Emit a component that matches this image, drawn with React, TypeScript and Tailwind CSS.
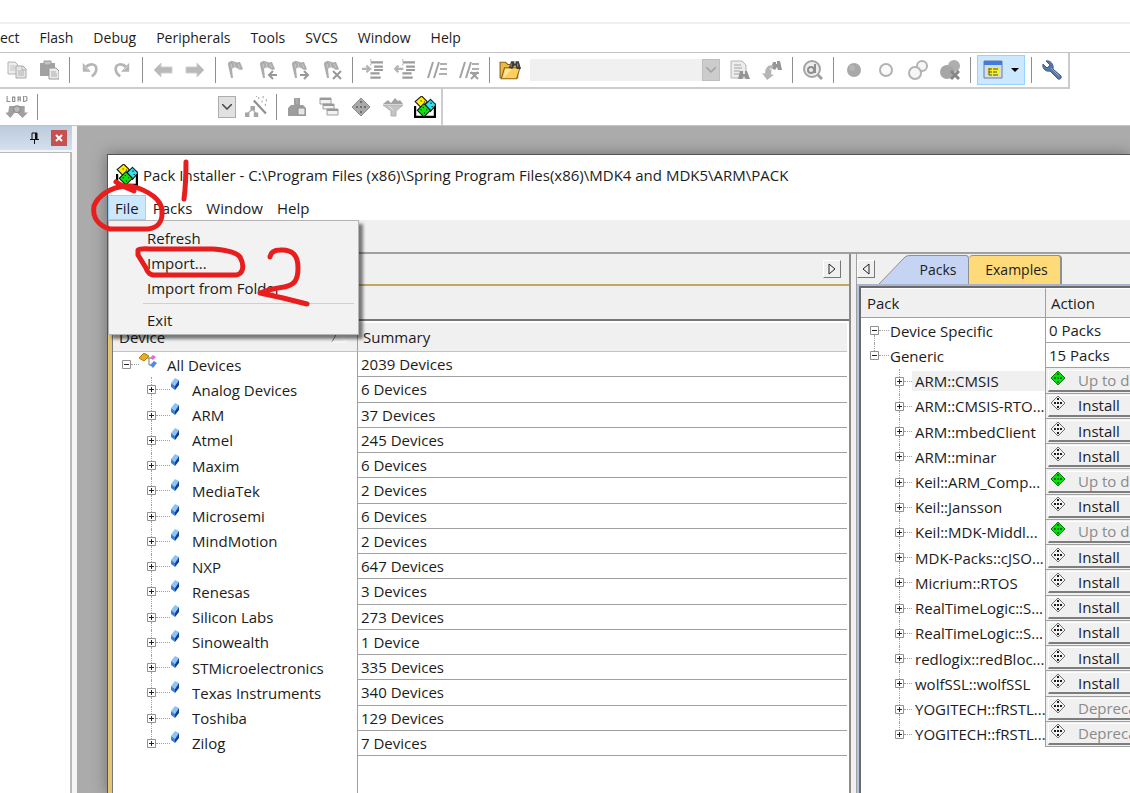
import type { ReactNode } from "react";

type RowState = "ok" | "install" | "deprecated";

const mainMenu = ["ect", "Flash", "Debug", "Peripherals", "Tools", "SVCS", "Window", "Help"];

const devices = [
  { name: "Analog Devices", summary: "6 Devices" },
  { name: "ARM", summary: "37 Devices" },
  { name: "Atmel", summary: "245 Devices" },
  { name: "Maxim", summary: "6 Devices" },
  { name: "MediaTek", summary: "2 Devices" },
  { name: "Microsemi", summary: "6 Devices" },
  { name: "MindMotion", summary: "2 Devices" },
  { name: "NXP", summary: "647 Devices" },
  { name: "Renesas", summary: "3 Devices" },
  { name: "Silicon Labs", summary: "273 Devices" },
  { name: "Sinowealth", summary: "1 Device" },
  { name: "STMicroelectronics", summary: "335 Devices" },
  { name: "Texas Instruments", summary: "340 Devices" },
  { name: "Toshiba", summary: "129 Devices" },
  { name: "Zilog", summary: "7 Devices" },
];

const packs: { name: string; state: RowState }[] = [
  { name: "ARM::CMSIS", state: "ok" },
  { name: "ARM::CMSIS-RTO...", state: "install" },
  { name: "ARM::mbedClient", state: "install" },
  { name: "ARM::minar", state: "install" },
  { name: "Keil::ARM_Comp...", state: "ok" },
  { name: "Keil::Jansson", state: "install" },
  { name: "Keil::MDK-Middl...", state: "ok" },
  { name: "MDK-Packs::cJSO...", state: "install" },
  { name: "Micrium::RTOS", state: "install" },
  { name: "RealTimeLogic::S...", state: "install" },
  { name: "RealTimeLogic::S...", state: "install" },
  { name: "redlogix::redBloc...", state: "install" },
  { name: "wolfSSL::wolfSSL", state: "install" },
  { name: "YOGITECH::fRSTL...", state: "deprecated" },
  { name: "YOGITECH::fRSTL...", state: "deprecated" },
];

const stateLabel: Record<RowState, string> = {
  ok: "Up to date",
  install: "Install",
  deprecated: "Deprecated",
};

/* ---------- icons ---------- */

function Icon({ children, size = 20 }: { children: ReactNode; size?: number }) {
  return (
    <svg width={size} height={size} viewBox="0 0 20 20" fill="none" aria-hidden="true" className="shrink-0">
      {children}
    </svg>
  );
}

const CopyIcon = () => (
  <Icon>
    <path d="M1 2h7l3 3v9H1z" fill="#ececec" stroke="#b4b4b4" />
    <path d="M3 6h5M3 8h6M3 10h5" stroke="#c4c4c4" />
    <path d="M9 6h7l3 3v9H9z" fill="#e6e6e6" stroke="#a9a9a9" />
    <path d="M15 6v4h4M11 11h6M11 13h6M11 15h6" stroke="#b4b4b4" />
  </Icon>
);

const PasteIcon = () => (
  <Icon>
    <path d="M1 3h15v13H1z" fill="#a2a2a2" />
    <path d="M5 1h7v4H5z" fill="#c4c4c4" stroke="#999" />
    <path d="M10 8h7l3 3v8H10z" fill="#ececec" stroke="#999" />
    <path d="M12 12h5M12 14h6M12 16h6" stroke="#aaa" />
  </Icon>
);

const UndoIcon = ({ flip = false }: { flip?: boolean }) => (
  <Icon size={18}>
    <g transform={flip ? "translate(20 0) scale(-1 1)" : undefined}>
      <path d="M5 7c5-5 12-4 12 2 0 4-2 6-5 8" stroke="#b5b5b5" strokeWidth="3" />
      <path d="M2 2v10h9z" fill="#b5b5b5" />
      <path d="M4 6l4 4" stroke="#dedede" />
    </g>
  </Icon>
);

const ArrowIcon = ({ flip = false }: { flip?: boolean }) => (
  <Icon>
    <path
      d="M1 10l7-7v4h11v6H8v4z"
      fill="#b9b9b9"
      stroke="#cfcfcf"
      transform={flip ? "translate(20 0) scale(-1 1)" : undefined}
    />
  </Icon>
);

const FlagIcon = ({ mark }: { mark?: "left" | "right" | "x" }) => (
  <Icon>
    <path d="M2 3c3-3 5-2 7-1 3 1 4 0 5 0l3 7c-3 2-4 0-6-1-3-1-4 0-5 1l1 9H5L2 5z" fill="#adadad" />
    <path d="M5 4l1 4M8 3l1 4M12 4l2 4" stroke="#c9c9c9" />
    {mark === "left" && <path d="M19 15h-8m4-4l-4 4 4 4" stroke="#989898" strokeWidth="2" />}
    {mark === "right" && <path d="M10 15h8m-4-4l4 4-4 4" stroke="#989898" strokeWidth="2" />}
    {mark === "x" && <path d="M11 11l8 8m0-8l-8 8" stroke="#989898" strokeWidth="2" />}
  </Icon>
);

const IndentIcon = ({ flip = false }: { flip?: boolean }) => (
  <Icon size={22}>
    <path d="M8 3h11M11 7h8M11 10h8M8 13h8M8 17h9" stroke="#9b9b9b" strokeWidth="2" />
    <path d="M8 0v20" stroke="#b8b8b8" strokeDasharray="2 2" />
    <path d={flip ? "M8 9H1m3-3L1 9l3 3" : "M0 9h7M4 6l3 3-3 3"} stroke="#b3b3b3" strokeWidth="2" />
  </Icon>
);

const CommentIcon = ({ remove = false }: { remove?: boolean }) => (
  <Icon>
    <path d="M1 18L6 2M7 18l5-16" stroke="#a3a3a3" strokeWidth="2" />
    <path d="M13 4h7M13 9h7" stroke="#b0b0b0" strokeWidth="2" />
    {remove ? (
      <path d="M12 12l7 7m0-7l-7 7M11 13h9" stroke="#a0a0a0" strokeWidth="2" />
    ) : (
      <path d="M12 14h8" stroke="#b0b0b0" strokeWidth="2" />
    )}
  </Icon>
);

const FindFolderIcon = () => (
  <Icon size={22}>
    <path d="M1 3h5l2 2h9v12H1z" fill="#e9b949" stroke="#8a6414" />
    <path d="M2 18l3-10h14l-3 10z" fill="#ffcf5a" stroke="#8a6414" />
    <path d="M4 17l2-8h6z" fill="#ffe9a8" />
    <path d="M9 8l2-6h3v2h1V2h3l2 7h-4l-1-3h-1l-2 3z" fill="#3c3c3c" />
    <path d="M11 4v3M17 4v3" stroke="#8e8e8e" />
  </Icon>
);

const FindDocIcon = () => (
  <Icon>
    <path d="M1 1h11l4 4v13H1z" fill="#ececec" stroke="#b4b4b4" />
    <path d="M4 5h7M4 8h8M4 11h6M4 14h5" stroke="#a4a4a4" />
    <path d="M8 19l2-8h3v3h2v-3h2l3 8h-4l-2-3-2 3z" fill="#949494" />
  </Icon>
);

const FindDownIcon = () => (
  <Icon>
    <path d="M9 8l2-6h3v2h1V1h3l2 9h-4l-1-3-2 3z" fill="#969696" />
    <path d="M3 9h6v5h3l-6 6-6-6h3z" fill="#b5b5b5" transform="rotate(8 6 14)" />
    <path d="M5 11c1-4 3-5 6-4" stroke="#b5b5b5" strokeWidth="3" />
  </Icon>
);

const DebugIcon = () => (
  <Icon>
    <path d="M14 14l5 5" stroke="#a0a0a0" strokeWidth="3" />
    <circle cx="9" cy="9" r="8" fill="#ededed" stroke="#a4a4a4" strokeWidth="2" />
    <circle cx="8" cy="10" r="3" stroke="#8f8f8f" strokeWidth="2" />
    <path d="M12 4v9" stroke="#8f8f8f" strokeWidth="2" />
  </Icon>
);

const DotIcon = () => (
  <Icon>
    <circle cx="10" cy="10" r="7" fill="#a8a8a8" />
    <circle cx="8" cy="8" r="3" fill="#b5b5b5" />
  </Icon>
);

const RingIcon = () => (
  <Icon>
    <circle cx="10" cy="10" r="6" fill="#fafafa" stroke="#b2b2b2" strokeWidth="2" />
  </Icon>
);

const RingsIcon = () => (
  <Icon>
    <circle cx="14" cy="6" r="5" fill="#f6f6f6" stroke="#b2b2b2" strokeWidth="2" />
    <circle cx="7" cy="13" r="6" fill="#f6f6f6" stroke="#b2b2b2" strokeWidth="2" />
  </Icon>
);

const KillDotsIcon = () => (
  <Icon>
    <circle cx="14" cy="6" r="6" fill="#aeaeae" />
    <circle cx="7" cy="12" r="7" fill="#a6a6a6" />
    <path d="M11 11l8 8m0-8l-8 8" stroke="#878787" strokeWidth="3" />
  </Icon>
);

const WindowIcon = () => (
  <Icon>
    <path d="M1 1h18v17H1z" fill="#d5ddea" stroke="#6f7d92" />
    <path d="M1 1h18v4H1z" fill="#3f7ce0" />
    <path d="M4 7h12v9H4z" fill="#f5f02a" />
    <path d="M6 8v7M6 9h3M6 12h3M6 15h3M10 9h5M10 12h4M10 15h5" stroke="#4d5530" />
  </Icon>
);

const WrenchIcon = () => (
  <Icon>
    <path
      d="M4 1l4 4-3 3-4-4c-1 5 3 8 7 7l8 8c2 1 4-1 3-3l-8-7c1-5-3-9-7-8z"
      fill="#5876a6"
      stroke="#425c88"
      strokeWidth="1"
    />
    <path d="M9 8l8 8" stroke="#91a9cc" />
  </Icon>
);

const LoadIcon = () => (
  <Icon size={22}>
    <path
      d="M1 0v5h3M6 1h2v4H6zM11 5V1h2v4M11 3h2M16 0v5h1l2-1V1l-2-1z"
      stroke="#8d8d8d"
      strokeWidth="1"
    />
    <path d="M3 9h14v6h3l-5 5-5-5h3-6-3 4l-4 5-5-5h3z" fill="#a0a0a0" />
    <circle cx="10" cy="12" r="3" fill="#bababa" stroke="#8d8d8d" />
  </Icon>
);

const WandIcon = () => (
  <Icon size={22}>
    <path d="M8 4l11 12" stroke="#8f8f8f" strokeWidth="2" />
    <path d="M12 2h1M16 1h1M15 5h1M19 4h1M18 8h1M10 0h1" stroke="#aaa" strokeWidth="2" />
    <path d="M5 9h4v4H5zM0 15h4v4H0zM8 15h4v4H8z" fill="#a5a5a5" />
    <path d="M7 12l-5 4M7 12l3 4" stroke="#a5a5a5" />
  </Icon>
);

const TargetIcon = () => (
  <Icon>
    <path d="M7 1h6v7H7zM1 11l3-3h12l3 3v8H1z" fill="#9d9d9d" />
    <path d="M11 11h7v7h-7z" fill="#e6e6e6" stroke="#8d8d8d" />
    <path d="M8 2h2v5" stroke="#b7b7b7" />
  </Icon>
);

const LayersIcon = () => (
  <Icon>
    <path d="M1 1h11v6H1zM4 7h11v5H4zM8 12h11v6H8z" fill="#f2f2f2" stroke="#a0a0a0" strokeWidth="1" />
    <path d="M1 2h11M4 8h11M8 13h11" stroke="#999" strokeWidth="2" />
  </Icon>
);

const GreyDieIcon = () => (
  <Icon>
    <path d="M10 1l9 9-9 9-9-9z" fill="#a9a9a9" stroke="#8d8d8d" />
    <path d="M9 4h2v2H9zM5 9h2v2H5zM13 9h2v2h-2zM9 14h2v2H9zM9 9h2v2H9z" fill="#6f6f6f" />
  </Icon>
);

const FunnelIcon = () => (
  <Icon>
    <path d="M0 7l5-4 3 3 4-5 3 3 2-1 3 4z" fill="#a3a3a3" />
    <path d="M0 8h20l-7 6v5H8v-5z" fill="#c4c4c4" stroke="#b0b0b0" />
    <path d="M6 9l4 4" stroke="#e6e6e6" />
  </Icon>
);

const PackIcon = ({ size = 22 }: { size?: number }) => (
  <Icon size={size}>
    <path d="M1 9v10h18V7" fill="#fff" stroke="#000" strokeWidth="2" />
    <path d="M7 0l5 5-5 6-6-6z" fill="#ffee00" stroke="#222" />
    <path d="M15 3l5 5-5 6-5-6z" fill="#2fe3f0" stroke="#222" />
    <path d="M9 7l6 6-6 6-6-6z" fill="#12df12" stroke="#111" />
    <path d="M8 10h1v1H8zM11 12h1v1h-1zM6 12h1v1H6zM9 15h1v1H9zM6 4h1v1H6zM9 5h1v1H9zM15 6h1v1h-1zM16 9h1v1h-1z" fill="#000" />
  </Icon>
);

const StateIcon = ({ on }: { on: boolean }) => (
  <svg width="16" height="16" viewBox="0 0 16 16" aria-hidden="true" className="shrink-0">
    <path d="M8 1l7 7-7 7-7-7z" fill={on ? "#00e400" : "#f2f2f2"} stroke={on ? "#0a7a0a" : "#6f6f6f"} />
    <path d="M7 3h2v2H7zM4 7h2v2H4zM10 7h2v2h-2zM7 11h2v2H7zM7 7h2v2H7z" fill={on ? "#063" : "#1c1c1c"} />
  </svg>
);

const RootIcon = () => (
  <svg width="18" height="16" viewBox="0 0 18 16" fill="none" aria-hidden="true" className="mb-2 shrink-0">
    <path d="M8 5h4M10 5v7h3" stroke="#7b7b7b" />
    <path d="M0 5l5-5 5 3-5 5z" fill="#e9ae22" stroke="#b37d10" />
    <path d="M11 5l3-3 3 2-3 3z" fill="#dc6ddb" />
    <path d="M11 12l4-4 3 2-4 5z" fill="#4f8be0" />
  </svg>
);

const ChipIcon = () => (
  <svg width="10" height="12" viewBox="0 0 10 12" aria-hidden="true" className="mb-3 shrink-0">
    <path d="M1 5l4-5 4 2-4 6z" fill="#8cc4f4" />
    <path d="M1 5l4 3v4L1 9z" fill="#3d7fd6" />
    <path d="M9 2v5l-4 5V8z" fill="#0f3f9c" />
  </svg>
);

/* ---------- small controls ---------- */

function ToolButton({ label, children }: { label: string; children: ReactNode }) {
  return (
    <button type="button" aria-label={label} title={label} className="flex h-8 w-8 shrink-0 items-center justify-center">
      {children}
    </button>
  );
}

function Separator() {
  return (
    <div className="flex w-[9px] shrink-0 justify-center">
      <div className="h-[26px] w-px bg-[#8e8e8e]" />
    </div>
  );
}

function ComboBox({ label, disabled = false }: { label: string; disabled?: boolean }) {
  return (
    <div className={`mr-1 flex h-[22px] w-[190px] shrink-0 ${disabled ? "bg-[#f0f0f0]" : "bg-white"}`}>
      <div className="relative flex-1">
        <select aria-label={label} disabled={disabled} className="h-full w-full appearance-none bg-transparent">
          <option></option>
        </select>
        <span
          className={`pointer-events-none absolute inset-y-0 right-0 flex w-[18px] items-center justify-center border ${
            disabled ? "border-[#bfbfbf] bg-[#cccccc]" : "border-[#adadad] bg-[#e1e1e1]"
          }`}
        >
          <svg width="10" height="6" viewBox="0 0 10 6" fill="none">
            <path d="M0 0l5 5 5-5" stroke={disabled ? "#a0a0a0" : "#444"} strokeWidth="1.5" />
          </svg>
        </span>
      </div>
    </div>
  );
}

function Expander({ open = false, up = false, down = false }: { open?: boolean; up?: boolean; down?: boolean }) {
  return (
    <span className="flex h-[25px] w-[9px] shrink-0 flex-col items-center">
      <span className={`w-px flex-1 border-l border-dotted ${up ? "border-[#a0a0a0]" : "border-transparent"}`} />
      <svg width="9" height="9" viewBox="0 0 9 9" fill="none">
        <path d="M.5.5h8v8h-8z" fill="#fff" stroke="#919191" />
        <path d={open ? "M2 4.5h5" : "M2 4.5h5M4.5 2v5"} stroke="#222" />
      </svg>
      <span className={`w-px flex-1 border-l border-dotted ${down ? "border-[#a0a0a0]" : "border-transparent"}`} />
    </span>
  );
}

function ScrollButton({ left = false }: { left?: boolean }) {
  return (
    <button
      type="button"
      aria-label={left ? "Previous" : "Next"}
      className="flex size-[18px] shrink-0 items-center justify-center border border-t-white border-r-[#777] border-b-[#777] border-l-white bg-[#f0f0f0]"
    >
      <svg width="8" height="12" viewBox="0 0 8 12" fill="none">
        <path d={left ? "M7 1v10L1 6z" : "M1 1v10l6-5z"} stroke="#222" />
      </svg>
    </button>
  );
}

/* ---------- IDE chrome ---------- */

function MainToolbars() {
  return (
    <header className="bg-white">
      <div className="h-[22px]" />
      <nav className="flex h-[31px] items-center gap-5 border-t-2 border-b border-t-[#f0f0f0] border-b-[#c4c4c4] text-sm font-medium text-[#1c1c1c]">
        {mainMenu.map((item) => (
          <button key={item} type="button">
            {item}
          </button>
        ))}
      </nav>

      <div className="flex h-9 w-[1070px] items-center border-r-2 border-b-2 border-[#cccccc] pl-px">
        <ToolButton label="Copy"><CopyIcon /></ToolButton>
        <ToolButton label="Paste"><PasteIcon /></ToolButton>
        <Separator />
        <ToolButton label="Undo"><UndoIcon /></ToolButton>
        <ToolButton label="Redo"><UndoIcon flip /></ToolButton>
        <Separator />
        <ToolButton label="Back"><ArrowIcon /></ToolButton>
        <ToolButton label="Forward"><ArrowIcon flip /></ToolButton>
        <Separator />
        <ToolButton label="Toggle bookmark"><FlagIcon /></ToolButton>
        <ToolButton label="Previous bookmark"><FlagIcon mark="left" /></ToolButton>
        <ToolButton label="Next bookmark"><FlagIcon mark="right" /></ToolButton>
        <ToolButton label="Clear bookmarks"><FlagIcon mark="x" /></ToolButton>
        <Separator />
        <ToolButton label="Indent"><IndentIcon /></ToolButton>
        <ToolButton label="Unindent"><IndentIcon flip /></ToolButton>
        <ToolButton label="Comment"><CommentIcon /></ToolButton>
        <ToolButton label="Uncomment"><CommentIcon remove /></ToolButton>
        <Separator />
        <ToolButton label="Find in files"><FindFolderIcon /></ToolButton>
        <div className="ml-1 flex">
          <ComboBox label="Find text" disabled />
        </div>
        <ToolButton label="Find"><FindDocIcon /></ToolButton>
        <ToolButton label="Incremental find"><FindDownIcon /></ToolButton>
        <Separator />
        <ToolButton label="Debug"><DebugIcon /></ToolButton>
        <Separator />
        <ToolButton label="Insert breakpoint"><DotIcon /></ToolButton>
        <ToolButton label="Disable breakpoint"><RingIcon /></ToolButton>
        <ToolButton label="Disable all breakpoints"><RingsIcon /></ToolButton>
        <ToolButton label="Kill all breakpoints"><KillDotsIcon /></ToolButton>
        <Separator />
        <button
          type="button"
          aria-label="Project windows"
          className="mx-[2px] flex h-[30px] w-12 shrink-0 items-center justify-center gap-2 border border-[#99d1ff] bg-[#cce8ff]"
        >
          <WindowIcon />
          <svg width="8" height="4" viewBox="0 0 8 4">
            <path d="M0 0h8L4 4z" fill="#000" />
          </svg>
        </button>
        <Separator />
        <ToolButton label="Configuration"><WrenchIcon /></ToolButton>
      </div>

      <div className="border-b border-[#c4c4c4]">
        <div className="flex h-9 w-[443px] items-center border-r-2 border-[#cccccc] pl-px">
          <ToolButton label="Load"><LoadIcon /></ToolButton>
          <Separator />
          <div className="ml-1 flex">
            <ComboBox label="Target" />
          </div>
          <ToolButton label="Options for target"><WandIcon /></ToolButton>
          <Separator />
          <ToolButton label="File extensions"><TargetIcon /></ToolButton>
          <ToolButton label="Manage project items"><LayersIcon /></ToolButton>
          <ToolButton label="Run-time environment"><GreyDieIcon /></ToolButton>
          <ToolButton label="Select software packs"><FunnelIcon /></ToolButton>
          <ToolButton label="Pack installer"><PackIcon /></ToolButton>
        </div>
      </div>
    </header>
  );
}

function SidePanel() {
  return (
    <aside className="flex w-[77px] shrink-0 flex-col bg-[#f5f5f5] pr-[5px]">
      <div className="flex h-6 shrink-0 items-center justify-end gap-3 bg-linear-to-b from-[#bccbdc] to-[#d3e0ee] pr-[5px]">
        <button type="button" aria-label="Auto hide">
          <svg width="9" height="12" viewBox="0 0 9 12" fill="none">
            <path d="M2 7V1h5v6M0 7.5h9M4.500 8v4" stroke="#111" />
            <path d="M6 1v6" stroke="#111" strokeWidth="2" />
          </svg>
        </button>
        <button type="button" aria-label="Close" className="flex size-4 items-center justify-center bg-[#c75050]">
          <svg width="8" height="8" viewBox="0 0 8 8">
            <path d="M1 1l6 6m0-6L1 7" stroke="#fff" strokeWidth="2" />
          </svg>
        </button>
      </div>
      <div className="mt-[2px] flex-1 border-t border-r-2 border-[#b9b9b9] bg-white" />
    </aside>
  );
}

/* ---------- pack installer ---------- */

function FileMenu() {
  const item = "h-[25px] pl-[38px] text-left";
  return (
    <div className="absolute top-full left-0 z-10 flex w-[251px] flex-col border border-[#b4b4b4] bg-[#f2f2f2] pt-1 pb-[2px] shadow-[4px_4px_3px_rgba(0,0,0,0.5)]">
      <button type="button" className={item}>Refresh</button>
      <button type="button" className={item}>Import...</button>
      <button type="button" className={item}>Import from Folder</button>
      <div className="my-[3px] ml-[34px] mr-1 h-px bg-[#d0d0d0]" />
      <button type="button" className={item}>Exit</button>
    </div>
  );
}

function DevicesPane() {
  return (
    <section className="flex w-[743px] shrink-0 flex-col border-r-2 border-[#8c8c8c]">
      <div className="flex h-[30px] shrink-0 items-center justify-end pr-2">
        <ScrollButton />
      </div>
      <div className="flex flex-1 flex-col border-t-2 border-l-4 border-t-[#bfa860] border-l-[#e3c675]">
        <div className="h-[33px] shrink-0 border-l border-[#777]" />
        <div className="flex-1 border-t-2 border-l border-[#777] bg-white pr-[2px]">
          <table className="h-[435px] w-full table-fixed border-separate border-spacing-0 text-left">
            <colgroup>
              <col className="w-[245px]" />
              <col />
            </colgroup>
            <thead>
              <tr className="h-[31px] bg-[#f0f0f0]">
                <th className="border-t-2 border-r border-b border-t-white border-r-[#a0a0a0] border-b-[#c4c4c4] p-0 pr-2 pl-[6px] font-normal">
                  <div className="flex items-center justify-between">
                    Device
                    <svg width="18" height="12" viewBox="0 0 18 12" fill="none">
                      <path d="M1 11L7 0" stroke="#777" />
                      <path d="M7 0l9 11H1" stroke="#fff" />
                    </svg>
                  </div>
                </th>
                <th className="border-t-2 border-b border-t-white border-b-[#c4c4c4] p-0 pl-[5px] font-normal">Summary</th>
              </tr>
            </thead>
            <tbody>
              <tr>
                <td className="border-r border-[#a0a0a0] p-0">
                  <div className="flex h-[25px] items-center pl-[9px]">
                    <Expander open />
                    <span className="w-2 border-t border-dotted border-[#a0a0a0]" />
                    <RootIcon />
                    <span className="pl-[10px]">All Devices</span>
                  </div>
                </td>
                <td className="border-b border-[#a0a0a0] p-0 pl-[3px]">2039 Devices</td>
              </tr>
              {devices.map((d, i) => (
                <tr key={d.name}>
                  <td className="border-r border-[#a0a0a0] p-0">
                    <div className="flex h-[25px] items-center pl-[34px]">
                      <Expander up down={i < devices.length - 1} />
                      <span className="w-[14px] border-t border-dotted border-[#a0a0a0]" />
                      <ChipIcon />
                      <span className="pl-3">{d.name}</span>
                    </div>
                  </td>
                  <td className="border-b border-[#a0a0a0] p-0 pl-[3px]">{d.summary}</td>
                </tr>
              ))}
            </tbody>
          </table>
          <div className="h-full w-[245px] border-r border-[#a0a0a0]" />
        </div>
      </div>
    </section>
  );
}

function PacksPane() {
  return (
    <section className="ml-[5px] flex min-w-0 flex-1 flex-col border-l border-[#a0a0a0]">
      <div className="flex h-[30px] shrink-0 items-center">
        <ScrollButton left />
        <div className="flex self-end pl-1" role="tablist">
          <button type="button" role="tab" aria-selected="true" className="relative h-[29px] w-[90px] pl-7">
            <svg className="absolute inset-0" width="90" height="29" viewBox="0 0 90 29" fill="none" aria-hidden="true">
              <path d="M0 29L26 2q2-2 5-2h56q3 0 3 3v26z" fill="#c6d4f3" />
              <path d="M0 29L26 2q2-1.500 5-1.500h56q2.500 0 2.500 3V29" stroke="#8f8f8f" />
            </svg>
            <span className="relative text-sm">Packs</span>
          </button>
          <button
            type="button"
            role="tab"
            aria-selected="false"
            className="h-[29px] w-[93px] rounded-t border-t border-r-2 border-[#8f8f8f] bg-[#ffda78] pl-1 text-sm"
          >
            Examples
          </button>
        </div>
      </div>
      <div className="flex-1 border-t-2 border-l-2 border-t-[#a7b4d0] border-l-[#b4c3e4]">
        <div className="h-full border-t-2 border-l-2 border-[#6b6b6b] bg-white">
          <table className="h-[459px] w-full table-fixed border-separate border-spacing-0 text-left">
            <colgroup>
              <col className="w-[185px]" />
              <col />
            </colgroup>
            <thead>
              <tr className="h-[30px] bg-[#f0f0f0]">
                <th className="border-t border-r border-b border-t-white border-r-[#a0a0a0] border-b-[#a0a0a0] p-0 pl-[6px] font-normal">Pack</th>
                <th className="border-t border-b border-t-white border-b-[#a0a0a0] p-0 pl-[5px] font-normal">Action</th>
              </tr>
            </thead>
            <tbody>
              <tr>
                <td className="border-r border-[#a0a0a0] p-0">
                  <div className="flex h-[25px] items-center pl-[9px]">
                    <Expander open down />
                    <span className="w-[10px] border-t border-dotted border-[#a0a0a0]" />
                    <span className="pl-px">Device Specific</span>
                  </div>
                </td>
                <td className="border-b border-[#a0a0a0] p-0 pl-[3px]">0 Packs</td>
              </tr>
              <tr>
                <td className="border-r border-[#a0a0a0] p-0">
                  <div className="flex h-[25px] items-center pl-[9px]">
                    <Expander open up />
                    <span className="w-[10px] border-t border-dotted border-[#a0a0a0]" />
                    <span className="pl-px">Generic</span>
                  </div>
                </td>
                <td className="border-b border-[#a0a0a0] p-0 pl-[3px]">15 Packs</td>
              </tr>
              {packs.map((p, i) => (
                <tr key={i}>
                  <td className="border-r border-[#a0a0a0] p-0">
                    <div className="flex h-[25px] items-center pl-[34px]">
                      <Expander up down={i < packs.length - 1} />
                      <span className="w-2 shrink-0 border-t border-dotted border-[#a0a0a0]" />
                      <span className={`flex-1 pl-[3px] whitespace-nowrap ${i === 0 ? "bg-[#f0f0f0]" : ""}`}>{p.name}</span>
                    </div>
                  </td>
                  <td className="border-b border-[#a0a0a0] bg-[#f0f0f0] p-0 pl-[2px]">
                    <button
                      type="button"
                      disabled={p.state !== "install"}
                      className={`flex h-[22px] w-full items-center gap-3 overflow-hidden border-t border-b-2 border-l border-t-white border-b-[#7d7d7d] border-l-white pl-px whitespace-nowrap ${
                        p.state === "install" ? "text-[#1c1c1c]" : "text-[#8a8a8a]"
                      }`}
                    >
                      <span className="mb-1"><StateIcon on={p.state === "ok"} /></span>
                      {stateLabel[p.state]}
                    </button>
                  </td>
                </tr>
              ))}
            </tbody>
          </table>
        </div>
      </div>
    </section>
  );
}

function PackInstaller() {
  return (
    <div className="mt-7 ml-[30px] flex min-w-0 flex-1 flex-col border-t border-l border-[#555] bg-[#f0f0f0] shadow-[0_0_14px_rgba(0,0,0,0.35)]">
      <div className="flex h-10 shrink-0 items-center gap-[5px] bg-white pl-2 whitespace-nowrap">
        <PackIcon />
        Pack Installer - C:\Program Files (x86)\Spring Program Files(x86)\MDK4 and MDK5\ARM\PACK
      </div>
      <nav className="relative flex h-[25px] shrink-0 bg-white">
        <button type="button" className="border border-[#99d1ff] bg-[#cce8ff] px-[6px]">File</button>
        <button type="button" className="px-[7px]">Packs</button>
        <button type="button" className="px-[7px]">Window</button>
        <button type="button" className="px-[7px]">Help</button>
        <FileMenu />
      </nav>
      <div className="h-[34px] shrink-0 border-b-2 border-[#a0a0a0]" />
      <div className="flex flex-1">
        <DevicesPane />
        <PacksPane />
      </div>
    </div>
  );
}

// hand-drawn step marks: 1 = File, 2 = Import
function StepMarks() {
  return (
    <svg
      className="pointer-events-none absolute top-0 left-0 z-20"
      width="330"
      height="330"
      viewBox="0 0 330 330"
      fill="none"
      stroke="#e81e1e"
      strokeWidth="5"
      strokeLinecap="round"
      strokeLinejoin="round"
      aria-hidden="true"
    >
      <path d="M116 182Q125 188 134 191" />
      <path d="M127 186C108 187 97 198 94 206C92 218 99 226 110 229L148 229C157 228 162 222 162 214C163 203 154 194 138 188Q132 186 127 186" />
      <path d="M186 162Q186 184 184 199" />
      <path d="M138 250Q141 248 150 249L213 249Q236 251 240 257C245 266 243 274 236 275L153 275Q148 274 146 268L138 255Z" />
      <path d="M270 257Q271 250 280 250C292 249 298 255 298 268C298 281 294 285 284 287Q270 289 260 293L283 298L307 304" />
    </svg>
  );
}

export default function App() {
  return (
    <div className="relative flex h-screen flex-col overflow-hidden bg-[#ababab] font-['Open_Sans',sans-serif] text-[15px] leading-5 text-[#1c1c1c]">
      <MainToolbars />
      <main className="flex min-h-0 flex-1">
        <SidePanel />
        <PackInstaller />
      </main>
      <StepMarks />
    </div>
  );
}
